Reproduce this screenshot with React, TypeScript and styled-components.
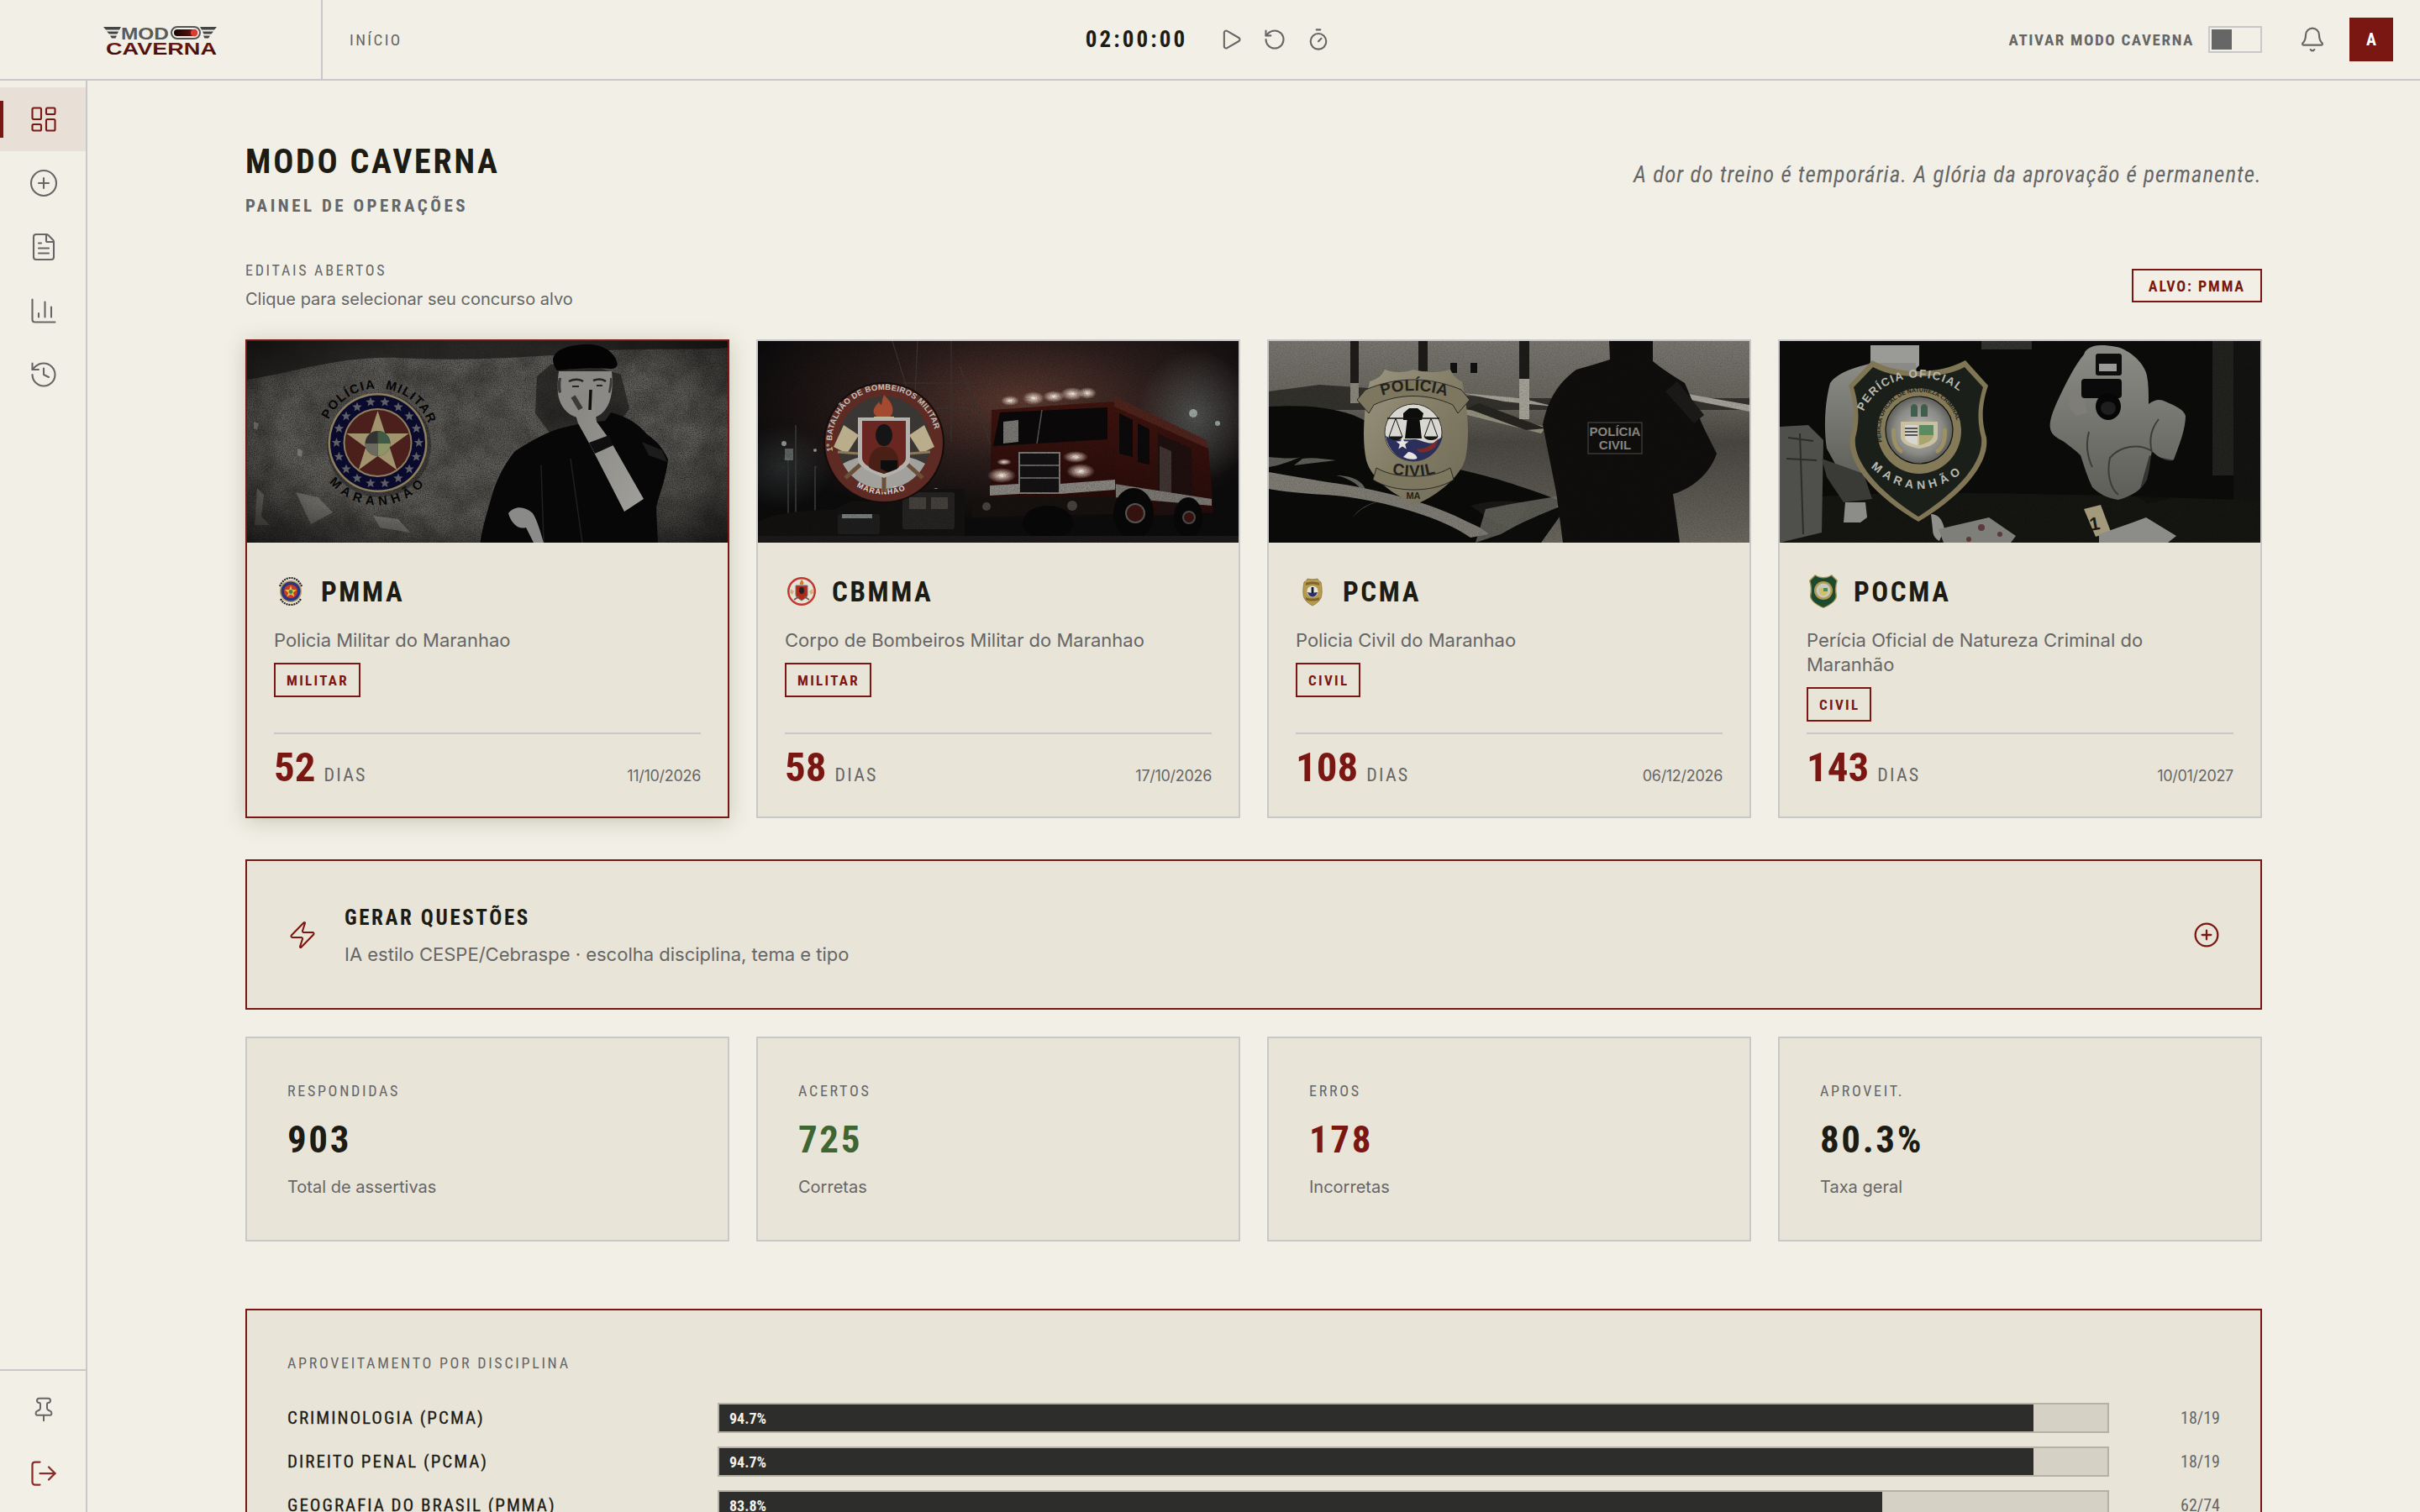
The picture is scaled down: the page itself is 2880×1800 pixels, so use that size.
import styled, { createGlobalStyle } from 'styled-components';
import {
  Bell,
  ChartColumn,
  CirclePlus,
  FileText,
  History,
  LayoutDashboard,
  LogOut,
  Pin,
  Play,
  RotateCcw,
  Timer,
  Zap,
} from 'lucide-react';

const display = `"Liberation Sans Narrow", "Roboto Condensed", Roboto, sans-serif`;
const body = `Inter, "Liberation Sans", sans-serif`;
const paper = '#f2f0e6';
const panel = '#e8e4d8';
const line = '#c8c8c8';
const wine = '#7a1712';
const ink = '#1c1c14';
const muted = '#666666';

const GlobalStyle = createGlobalStyle`
  html, body { margin: 0; padding: 0; background: ${paper}; }
  * { box-sizing: border-box; }
  #root { height: 100vh; }
`;

const Shell = styled.div`
  height: 100vh;
  display: flex;
  flex-direction: column;
  overflow: hidden;
  background: ${paper};
  font-family: ${body};
`;

const TopBar = styled.header`
  height: 96px;
  flex: none;
  display: grid;
  grid-template-columns: 1fr auto 1fr;
  align-items: stretch;
  border-bottom: 2px solid ${line};
`;

const TopLeft = styled.div`
  display: flex;
  align-items: stretch;
`;

const Brand = styled.div`
  width: 384px;
  display: flex;
  align-items: center;
  justify-content: center;
  border-right: 2px solid ${line};
`;

const Crumb = styled.span`
  align-self: center;
  padding-left: 32px;
  font-family: ${display};
  font-size: 19px;
  letter-spacing: 2.4px;
  color: ${muted};
`;

const TimerGroup = styled.div`
  display: flex;
  align-items: center;
  gap: 24px;
  margin-right: 5px;
`;

const Clock = styled.span`
  font-family: ${display};
  font-weight: 700;
  font-size: 27px;
  letter-spacing: 3.1px;
  color: ${ink};
  margin-right: 14px;
`;

const TopRight = styled.div`
  display: flex;
  align-items: center;
  justify-content: flex-end;
  padding-right: 32px;
`;

const ModeLabel = styled.span`
  font-family: ${display};
  font-weight: 700;
  font-size: 19px;
  letter-spacing: 1.6px;
  color: ${muted};
  margin-right: 17px;
`;

const Toggle = styled.div`
  width: 64px;
  height: 32px;
  border: 2px solid ${line};
  padding: 2px;
  margin-right: 44px;
`;

const Knob = styled.div`
  width: 24px;
  height: 24px;
  background: ${muted};
`;

const Avatar = styled.div`
  width: 52px;
  height: 52px;
  margin-left: 28px;
  background: ${wine};
  color: #ffffff;
  display: flex;
  align-items: center;
  justify-content: center;
  font-family: ${display};
  font-weight: 700;
  font-size: 20px;
`;

const Body = styled.div`
  flex: 1;
  min-height: 0;
  display: flex;
`;

const Sidebar = styled.aside`
  width: 104px;
  flex: none;
  display: flex;
  flex-direction: column;
  justify-content: space-between;
  border-right: 2px solid ${line};
`;

const SideGroup = styled.nav<{ $foot?: boolean }>`
  padding: 8px 0;
  border-top: ${(p) => (p.$foot ? `2px solid ${line}` : 'none')};
`;

const SideItem = styled.div<{ $active?: boolean; $danger?: boolean }>`
  position: relative;
  height: 76px;
  padding-left: 2px;
  display: flex;
  align-items: center;
  justify-content: center;
  background: ${(p) => (p.$active ? '#e8dfd6' : 'transparent')};
  color: ${(p) => (p.$active ? wine : p.$danger ? '#8b2a26' : muted)};

  &::before {
    content: '';
    display: ${(p) => (p.$active ? 'block' : 'none')};
    position: absolute;
    left: 0;
    top: 16px;
    width: 4px;
    height: 44px;
    background: ${wine};
  }
`;

const Main = styled.main`
  flex: 1;
  min-width: 0;
  overflow: hidden;
  padding-top: 73px;
`;

const Page = styled.div`
  width: 2400px;
  margin: 0 auto;
`;

const Hero = styled.div`
  display: flex;
  justify-content: space-between;
  align-items: flex-start;
  margin-bottom: 49px;
`;

const Title = styled.h1`
  margin: 0 0 15px;
  font-family: ${display};
  font-weight: 700;
  font-size: 40px;
  line-height: 48px;
  letter-spacing: 2.8px;
  color: ${ink};
`;

const Subtitle = styled.div`
  font-family: ${display};
  font-weight: 700;
  font-size: 21px;
  line-height: 26px;
  letter-spacing: 3.5px;
  color: ${muted};
`;

const Quote = styled.p`
  margin: 25px 0 0;
  font-family: ${display};
  font-style: italic;
  font-size: 27px;
  line-height: 28px;
  letter-spacing: 1px;
  color: ${muted};
`;

const SectionHead = styled.div`
  display: flex;
  justify-content: space-between;
  align-items: flex-start;
  margin-bottom: 33px;
`;

const Eyebrow = styled.div`
  font-family: ${display};
  font-size: 18px;
  line-height: 30px;
  letter-spacing: 2.7px;
  color: ${muted};
`;

const Hint = styled.div`
  margin-top: 4px;
  font-size: 20px;
  line-height: 30px;
  color: ${muted};
`;

const TargetBadge = styled.div`
  height: 40px;
  margin-top: 13px;
  padding: 0 18px;
  display: flex;
  align-items: center;
  border: 2px solid ${wine};
  font-family: ${display};
  font-weight: 700;
  font-size: 18px;
  letter-spacing: 1.9px;
  color: ${wine};
`;

const CardGrid = styled.div`
  display: grid;
  grid-template-columns: repeat(4, 1fr);
  gap: 32px;
  margin-bottom: 49px;
`;

const Card = styled.article<{ $selected?: boolean }>`
  height: 570px;
  display: flex;
  flex-direction: column;
  background: ${panel};
  border: 2px solid ${(p) => (p.$selected ? wine : line)};
  box-shadow: ${(p) => (p.$selected ? '0 4px 24px rgba(60, 60, 30, 0.22)' : 'none')};
`;

const Banner = styled.svg`
  display: block;
  width: 100%;
  height: 240px;
  flex: none;
`;

const CardBody = styled.div`
  flex: 1;
  display: flex;
  flex-direction: column;
  align-items: flex-start;
  padding: 38px 32px 32px;
`;

const CardHead = styled.div`
  height: 40px;
  display: flex;
  align-items: center;
  gap: 16px;
  margin-bottom: 24px;
`;

const Crest = styled.svg`
  width: 40px;
  height: 40px;
  flex: none;
`;

const CardName = styled.h3`
  margin: 0;
  font-family: ${display};
  font-weight: 700;
  font-size: 33px;
  letter-spacing: 2.6px;
  color: ${ink};
`;

const CardDesc = styled.p`
  margin: 0 0 12px;
  font-size: 22px;
  line-height: 29px;
  color: ${muted};
`;

const Tag = styled.span`
  height: 41px;
  padding: 0 12px 0 13px;
  display: inline-flex;
  align-items: center;
  border: 2px solid ${wine};
  font-family: ${display};
  font-weight: 700;
  font-size: 17px;
  letter-spacing: 2.3px;
  color: ${wine};
`;

const CardFoot = styled.div`
  width: 100%;
  margin-top: auto;
  border-top: 2px solid ${line};
  padding-top: 14px;
  display: flex;
  align-items: baseline;
`;

const Days = styled.span`
  font-family: ${display};
  font-weight: 700;
  font-size: 49px;
  line-height: 52px;
  color: ${wine};
  margin-right: 10px;
`;

const DaysUnit = styled.span`
  font-family: ${display};
  font-size: 22px;
  letter-spacing: 2.2px;
  color: ${muted};
`;

const CardDate = styled.span`
  margin-left: auto;
  font-size: 18px;
  letter-spacing: -0.3px;
  color: ${muted};
`;

const Generate = styled.section`
  display: flex;
  align-items: center;
  gap: 32px;
  height: 179px;
  padding: 0 48px;
  margin-bottom: 32px;
  background: ${panel};
  border: 2px solid ${wine};
  color: ${wine};
`;

const GenerateText = styled.div`
  flex: 1;
  padding-top: 4px;
`;

const GenerateTitle = styled.div`
  font-family: ${display};
  font-weight: 700;
  font-size: 25px;
  line-height: 30px;
  letter-spacing: 2.6px;
  color: ${ink};
  margin-bottom: 13px;
`;

const GenerateSub = styled.div`
  font-size: 22px;
  line-height: 30px;
  color: ${muted};
`;

const StatGrid = styled.div`
  display: grid;
  grid-template-columns: repeat(4, 1fr);
  gap: 32px;
  margin-bottom: 80px;
`;

const Stat = styled.div`
  height: 244px;
  padding: 48px;
  background: ${panel};
  border: 2px solid ${line};
`;

const StatLabel = styled(Eyebrow)`
  margin-bottom: 18px;
`;

const StatValue = styled.div<{ $tone?: string }>`
  font-family: ${display};
  font-weight: 700;
  font-size: 45px;
  line-height: 50px;
  letter-spacing: 2.6px;
  color: ${(p) => p.$tone ?? ink};
  margin-bottom: 17px;
`;

const StatNote = styled.div`
  font-size: 20px;
  line-height: 28px;
  color: ${muted};
`;

const Breakdown = styled.section`
  padding: 48px;
  background: ${panel};
  border: 2px solid ${wine};
`;

const BreakdownHead = styled(Eyebrow)`
  margin-bottom: 32px;
`;

const BarRow = styled.div`
  display: grid;
  grid-template-columns: 480px 1fr 100px;
  column-gap: 32px;
  align-items: center;
  margin-bottom: 16px;
`;

const BarLabel = styled.div`
  font-family: ${display};
  font-size: 21px;
  letter-spacing: 2px;
  -webkit-text-stroke: 0.3px ${ink};
  color: ${ink};
`;

const BarTrack = styled.div`
  height: 36px;
  background: #d5d1c5;
  border: 2px solid #b5b1a5;
`;

const BarFill = styled.div`
  height: 100%;
  padding-left: 12px;
  display: flex;
  align-items: center;
  background: #2d2d2b;
  font-family: ${display};
  font-weight: 700;
  font-size: 18px;
  color: #f2f0e6;
`;

const BarCount = styled.div`
  text-align: right;
  font-family: ${display};
  font-size: 20px;
  color: ${muted};
`;

const svgFont = '"Liberation Sans", Arial, sans-serif';

function starPoints(cx: number, cy: number, R: number, r: number, n = 5) {
  const pts: string[] = [];
  for (let i = 0; i < n * 2; i++) {
    const a = (Math.PI * i) / n - Math.PI / 2;
    const d = i % 2 === 0 ? R : r;
    pts.push(`${(cx + d * Math.cos(a)).toFixed(1)},${(cy + d * Math.sin(a)).toFixed(1)}`);
  }
  return pts.join(' ');
}

function Grain({ id, freq = 0.9, alpha = 0.5 }: { id: string; freq?: number; alpha?: number }) {
  return (
    <filter id={id} x="0" y="0" width="100%" height="100%">
      <feTurbulence type="fractalNoise" baseFrequency={freq} numOctaves={4} seed={7} />
      <feColorMatrix values={`0 0 0 0 0  0 0 0 0 0  0 0 0 0 0  0 0 0 ${alpha * 3} ${-alpha}`} />
    </filter>
  );
}

function Logo() {
  return (
    <svg width="136" height="44" viewBox="0 -5 136 44">
      <defs>
        <linearGradient id="logoRed" x1="0" y1="0" x2="0" y2="1">
          <stop offset="0" stopColor="#8a1c16" />
          <stop offset="1" stopColor="#2c0b09" />
        </linearGradient>
        <linearGradient id="logoPill" x1="0" y1="0" x2="1" y2="0">
          <stop offset="0" stopColor="#140606" />
          <stop offset="0.6" stopColor="#4a0f0c" />
          <stop offset="1" stopColor="#a01a14" />
        </linearGradient>
      </defs>
      <path d="M0 2h21l-2 3.500H3zM4 7.500h14l-1.500 3H7zM8 12.500h8l-1.500 3H10z" fill="#454545" />
      <path d="M135 2h-20l2 3.500h15zM131 7.500h-13l1.500 3h9zM127 12.500h-8l1.500 3h4.500z" fill="#454545" />
      <text x="21" y="16.500" fontFamily={svgFont} fontWeight="700" fontSize="20.500" fill="#5a5a5a" textLength="57" lengthAdjust="spacingAndGlyphs">MOD</text>
      <rect x="81" y="2" width="34" height="14" rx="7" fill="#f2f0e6" stroke="#555" strokeWidth="2" />
      <rect x="84" y="5" width="28" height="8" rx="4" fill="url(#logoPill)" />
      <circle cx="108" cy="9" r="4.200" fill="#e03a30" />
      <text x="3" y="35" fontFamily={svgFont} fontWeight="700" fontSize="21" fill="url(#logoRed)" textLength="132" lengthAdjust="spacingAndGlyphs">CAVERNA</text>
    </svg>
  );
}

function PmmaEmblem() {
  const ring = Array.from({ length: 18 }, (_, i) => {
    const a = (i / 18) * Math.PI * 2;
    return starPoints(155.5 + 49 * Math.cos(a), 121 + 49 * Math.sin(a), 6, 2.6);
  });
  return (
    <g>
      <circle cx="157" cy="124" r="62" fill="#000" opacity="0.3" />
      <circle cx="155.5" cy="121" r="59" fill="#8d7f5f" />
      <circle cx="155.5" cy="121" r="56.5" fill="#0a0b2c" />
      {ring.map((p) => (
        <polygon key={p} points={p} fill="#5e5e66" />
      ))}
      <circle cx="155.5" cy="121" r="41" fill="#8d7f5f" />
      <circle cx="155.5" cy="121" r="39" fill="#4a1f1c" />
      <polygon points={starPoints(155.5, 122, 39, 15)} fill="#a1936d" />
      <circle cx="155.5" cy="122" r="15" fill="#333" />
      <path d="M155.5 107a15 15 0 0 1 15 15h-15z" fill="#3f5a45" />
      <path d="M155.5 122h15a15 15 0 0 1-15 15z" fill="#8c9468" />
      <path d="M140.5 122h15v15a15 15 0 0 1-15-15z" fill="#6a6a60" />
      <path id="pmArcA" d="M97 93.700A64.500 64.500 0 0 1 153.200 56.500" fill="none" />
      <path id="pmArcB" d="M164.500 57.100A64.500 64.500 0 0 1 216.500 100" fill="none" />
      <path id="pmArcC" d="M98 168A74 74 0 0 0 213 168" fill="none" />
      <text fontFamily={svgFont} fontWeight="700" fontSize="15" letterSpacing="1.5" fill="#060606">
        <textPath href="#pmArcA">POLÍCIA</textPath>
      </text>
      <text fontFamily={svgFont} fontWeight="700" fontSize="15" letterSpacing="1.5" fill="#060606">
        <textPath href="#pmArcB">MILITAR</textPath>
      </text>
      <text fontFamily={svgFont} fontWeight="700" fontSize="15" letterSpacing="5.5" fill="#060606">
        <textPath href="#pmArcC">MARANHÃO</textPath>
      </text>
    </g>
  );
}

function PmmaScene() {
  return (
    <Banner viewBox="0 0 572 240" preserveAspectRatio="none">
      <defs>
        <Grain id="pmGrain" freq={0.8} alpha={0.55} />
        <Grain id="pmBlotch" freq={0.03} alpha={0.55} />
        <radialGradient id="pmVig" cx="0.5" cy="0.45" r="0.78">
          <stop offset="0.55" stopColor="#000" stopOpacity="0" />
          <stop offset="1" stopColor="#000" stopOpacity="0.8" />
        </radialGradient>
        <linearGradient id="pmSkin" x1="0" y1="0" x2="1" y2="1">
          <stop offset="0" stopColor="#86857f" />
          <stop offset="1" stopColor="#a09f9b" />
        </linearGradient>
      </defs>
      <rect width="572" height="240" fill="#605e5a" />
      <rect width="572" height="240" filter="url(#pmBlotch)" opacity="0.3" />
      <rect width="572" height="240" filter="url(#pmGrain)" opacity="0.5" />
      <path d="M0 0h572v8c-60 4-120-2-190 8-70 4-130 8-200 4-70-3-120 16-182 26z" fill="#1d1b1a" opacity="0.8" />
      <path d="M12 175l8 8-3 26 10 10-18 0zM58 180l26 6 18 18-26 14zM150 208l30 4 14 16-36-6zM8 96l6 2-2 8-4-2zM60 128l6 2-1 8-5-2z" fill="#a5a39e" opacity="0.45" />
      <rect width="572" height="240" fill="url(#pmVig)" />
      <PmmaEmblem />
      <path d="M345 42l16-14 58 4 26 8 10 40-20 30-70 6-22-30z" fill="#141312" opacity="0.6" />
      <path d="M277 244c2-20 10-44 15-62 6-20 16-38 27-51 16-10 32-20 50-26 20-6 38-8 57-10l7-10c14 4 30 10 43 26 12 8 20 18 25 30-2 22-10 40-14 57l2 46z" fill="#070707" />
      <path d="M350 148l3 92M385 140l14 100" stroke="#202020" strokeWidth="1.500" fill="none" />
      <path d="M470 120l24 10 6 14-22-8z" fill="#1c1c1c" />
      <path d="M371 36h63c2 20 0 36-8 46-6 8-16 12-28 10-16-2-26-14-28-30-1-8 0-18 1-26z" fill="#8a8986" />
      <path d="M371 44c-2 6-2 12 0 18l3-1c-1-6-1-11 0-17zM434 44c1 6 0 12-2 18l-2-1c1-6 2-11 2-17z" fill="#3a3a38" />
      <path d="M364 22c2-13 22-18 42-18 18 0 33 10 35 24-2 4-4 5-8 5-22-2-46 0-64 2-3-4-5-8-5-13z" fill="#040404" />
      <path d="M383 48c6-3 13-3 17 0M412 47c5-2 11-2 15 1" stroke="#232321" strokeWidth="2.500" fill="none" />
      <path d="M387 54h8M416 53h7" stroke="#262624" strokeWidth="2.200" />
      <path d="M394 98c-3-10-7-24-6-33l8-2 14-5 4 22 2 16 16 22 40 70-23 15-23-45-17-33z" fill="url(#pmSkin)" />
      <path d="M388 66l9 15" stroke="#3a3a38" strokeWidth="6" />
      <path d="M409 58l-1 24" stroke="#0e0e0e" strokeWidth="3.500" />
      <path d="M407 121l24-9 5 12-22 10z" fill="#0f0f0f" />
      <path d="M311 205c7-9 19-9 29 0 6 10 9 22 13 35h-12l-9-18c-10 3-18-6-21-17z" fill="#8a8a88" />
    </Banner>
  );
}

function CbmmaScene() {
  return (
    <Banner viewBox="0 0 572 240" preserveAspectRatio="none">
      <defs>
        <radialGradient id="cbGlow" cx="0.55" cy="0.3" r="0.6">
          <stop offset="0" stopColor="#5c3a31" />
          <stop offset="0.5" stopColor="#2c1e1c" />
          <stop offset="1" stopColor="#0d0c0d" />
        </radialGradient>
        <radialGradient id="cbMist" cx="0.5" cy="0.5" r="0.5">
          <stop offset="0" stopColor="#7a8a88" stopOpacity="0.5" />
          <stop offset="1" stopColor="#7a8a88" stopOpacity="0" />
        </radialGradient>
        <radialGradient id="cbLight" cx="0.5" cy="0.5" r="0.5">
          <stop offset="0" stopColor="#ffffff" />
          <stop offset="0.35" stopColor="#e8d2c4" stopOpacity="0.75" />
          <stop offset="1" stopColor="#e8d2c4" stopOpacity="0" />
        </radialGradient>
        <linearGradient id="cbBody" x1="0" y1="0" x2="0" y2="1">
          <stop offset="0" stopColor="#40140f" />
          <stop offset="1" stopColor="#260c0a" />
        </linearGradient>
        <Grain id="cbGrain" freq={0.7} alpha={0.35} />
      </defs>
      <rect width="572" height="240" fill="url(#cbGlow)" />
      <ellipse cx="520" cy="90" rx="70" ry="80" fill="url(#cbMist)" />
      <ellipse cx="30" cy="150" rx="60" ry="50" fill="url(#cbMist)" opacity="0.5" />
      <path d="M160 0l40 130M190 0l-6 120M230 0v120M240 30l40 100M172 50h80M190 80h70" stroke="#3c3633" strokeWidth="1.200" fill="none" />
      <path d="M45 100v120M70 150h-2v70M30 140h6v70" stroke="#343432" strokeWidth="2" fill="none" />
      <rect x="32" y="128" width="10" height="14" fill="#9aa6a4" opacity="0.5" />
      <g fill="#b7c4bf" opacity="0.75">
        <circle cx="31" cy="122" r="3" />
        <circle cx="68" cy="130" r="2" />
        <circle cx="518" cy="86" r="5" />
        <circle cx="510" cy="112" r="4" />
        <circle cx="547" cy="98" r="3" />
        <circle cx="212" cy="178" r="3" />
      </g>
      <path d="M0 215c20-10 50-14 90-14l20-10h60l40-15h36v60H0z" fill="#131211" />
      <rect x="95" y="206" width="50" height="24" rx="3" fill="#201f1f" />
      <rect x="100" y="206" width="36" height="5" fill="#9ea6a6" opacity="0.7" />
      <rect x="172" y="180" width="62" height="44" rx="3" fill="#262422" />
      <path d="M180 186h20v14h-20zM206 186h20v14h-20z" fill="#45423e" />
      <path d="M424 70l112 56 6 78-118 6z" fill="url(#cbBody)" />
      <path d="M424 66l110 52 2 10-112-50z" fill="#4f241d" />
      <path d="M430 86l16 8v44l-16-4zM452 98l14 7v42l-14-3z" fill="#0c0a0a" />
      <path d="M476 110l40 18 2 76-42 4z" fill="#201010" />
      <path d="M478 125l14 6v58l-14 1z" fill="#4a3e3c" opacity="0.8" />
      <path d="M424 170l116 18v8l-116-10z" fill="#7c7873" />
      <path d="M278 82l146-10 2 116-150 4z" fill="url(#cbBody)" />
      <path d="M288 85l128-6v38l-136 8z" fill="#0b0909" />
      <path d="M292 96l18-2v26l-18 2z" fill="#7a7874" />
      <path d="M338 82l-6 40" stroke="#5c5a58" strokeWidth="1.500" />
      <rect x="311" y="133" width="48" height="48" fill="#141212" stroke="#7c7a76" strokeWidth="2" />
      <path d="M311 148h48M311 163h48" stroke="#7c7a76" strokeWidth="1.500" />
      <path d="M276 172l35-2v12l-35 2zM359 170l66-5v12l-66 5z" fill="#8a8680" />
      <path d="M255 186h170v20l-170 4z" fill="#17120f" />
      <circle cx="272" cy="197" r="5" fill="#4a4340" />
      <circle cx="374" cy="196" r="6" fill="#4a4340" />
      <ellipse cx="290" cy="160" rx="17" ry="9" fill="url(#cbLight)" />
      <ellipse cx="384" cy="155" rx="17" ry="9" fill="url(#cbLight)" />
      <ellipse cx="378" cy="138" rx="15" ry="7" fill="url(#cbLight)" />
      <ellipse cx="293" cy="144" rx="9" ry="4" fill="url(#cbLight)" />
      <g fill="url(#cbLight)">
        <ellipse cx="300" cy="71" rx="11" ry="6" />
        <ellipse cx="328" cy="68" rx="13" ry="8" />
        <ellipse cx="352" cy="66" rx="13" ry="7" />
        <ellipse cx="374" cy="63" rx="14" ry="8" />
        <ellipse cx="392" cy="62" rx="11" ry="7" />
      </g>
      <g fill="#090808">
        <ellipse cx="345" cy="216" rx="30" ry="20" />
        <ellipse cx="447" cy="205" rx="24" ry="30" />
        <ellipse cx="512" cy="210" rx="17" ry="24" />
      </g>
      <circle cx="449" cy="205" r="11" fill="#3a1410" stroke="#5a5a58" strokeWidth="2" />
      <circle cx="513" cy="210" r="7" fill="#3a1410" stroke="#4f4f4d" strokeWidth="2" />
      <rect y="232" width="572" height="8" fill="#1d1a19" />
      <rect width="572" height="240" filter="url(#cbGrain)" opacity="0.4" />
      <g>
        <circle cx="150" cy="121" r="72" fill="#120d0b" />
        <circle cx="150" cy="121" r="70" fill="#5e2a24" />
        <circle cx="150" cy="121" r="55" fill="#3a3633" />
        <path d="M101 146a55 55 0 0 0 98 0c-20-11-34-9-49-9s-29-2-49 9z" fill="#a3a19d" />
        <path id="cbArc" d="M89 131A62 62 0 1 1 211 131" fill="none" />
        <path id="cbArcB" d="M114 171A62 62 0 0 0 186 171" fill="none" />
        <text fontFamily={svgFont} fontSize="9.500" fontWeight="700" letterSpacing="0.300" fill="#c4c0ba">
          <textPath href="#cbArc">1º BATALHÃO DE BOMBEIROS MILITAR</textPath>
        </text>
        <text fontFamily={svgFont} fontSize="9" fontWeight="700" letterSpacing="1" fill="#d9d6d0">
          <textPath href="#cbArcB" startOffset="4">MARANHÃO</textPath>
        </text>
        <path d="M150 64c8 8 12 14 10 22-2 4-4 6-10 6s-10-2-12-6c-2-6 4-10 6-14 1 3 3 4 3 4 1-4 1-8 3-12z" fill="#a44a30" />
        <rect x="138" y="90" width="24" height="4" fill="#c8b890" />
        <path d="M102 100l18 12-14 22-16-8zM198 100l-18 12 14 22 16-8z" fill="#b9ad8c" />
        <path d="M95 132l25 2M205 132l-25 2" stroke="#8a7a5a" strokeWidth="3" />
        <path d="M122 147l-18 16M178 147l18 16M150 160v20" stroke="#6a5038" strokeWidth="5" />
        <path d="M119 91h62v50c0 10-18 16-31 22-13-6-31-12-31-22z" fill="#b5b2ad" />
        <path d="M124 95h52v44c0 9-15 14-26 19-11-5-26-10-26-19z" fill="#6a2620" />
        <ellipse cx="150" cy="112" rx="10" ry="13" fill="#151515" />
        <path d="M132 150c0-14 4-24 18-24s18 10 18 24c-4 4-12 6-18 8-6-2-14-4-18-8z" fill="#4a2016" />
        <path d="M146 142h20v10l-12 4-8-4z" fill="#0d0d0d" />
      </g>
    </Banner>
  );
}

function PcmaScene() {
  return (
    <Banner viewBox="0 0 572 240" preserveAspectRatio="none">
      <defs>
        <linearGradient id="pcSky" x1="0" y1="0" x2="0" y2="1">
          <stop offset="0" stopColor="#797670" />
          <stop offset="0.3" stopColor="#68655d" />
          <stop offset="0.5" stopColor="#4a4841" />
          <stop offset="1" stopColor="#6a675f" />
        </linearGradient>
        <linearGradient id="pcBadge" x1="0" y1="0" x2="1" y2="1">
          <stop offset="0" stopColor="#9a9480" />
          <stop offset="0.5" stopColor="#837d66" />
          <stop offset="1" stopColor="#6f6a56" />
        </linearGradient>
        <Grain id="pcGrain" freq={0.8} alpha={0.3} />
      </defs>
      <rect width="572" height="240" fill="url(#pcSky)" />
      <path d="M0 60l60-8 60 4 90 8 100 4 170 0 92 0v14H0z" fill="#34322d" />
      <path d="M230 62l70 6 40 10-60-6zM470 58l102 18v8l-90-18z" fill="#a5a298" />
      <path d="M220 78l110 24-6 8-96-24z" fill="#94917f" />
      <path d="M236 80l70 26 24-2-80-30z" fill="#26251f" />
      <rect x="97" y="0" width="10" height="55" fill="#1e1c19" />
      <rect x="97" y="50" width="10" height="24" fill="#8a877d" />
      <rect x="178" y="0" width="11" height="36" fill="#1e1c19" />
      <rect x="298" y="0" width="12" height="45" fill="#1e1c19" />
      <rect x="298" y="45" width="12" height="48" fill="#a5a298" />
      <rect x="216" y="26" width="8" height="12" fill="#111" />
      <rect x="240" y="26" width="8" height="12" fill="#111" />
      <path d="M0 78c40-2 70 0 100 10 30 12 50 32 66 50l90 22c30 8 70 22 90 30l-22 50H0z" fill="#0b0b0a" />
      <path d="M0 156l70 12c60 8 120 24 160 44 12 6 24 10 32 18l-22 4c-30-22-100-44-160-50-30-2-60-4-80-8z" fill="#7e7c73" />
      <path d="M0 138c20 2 30 2 38 0-10 4-24 10-38 12zM40 140c12-2 24 0 40 2l-50 6z" fill="#5e5d57" />
      <path d="M100 210c10-16 40-26 66-20-14-4-48-2-66 20zM80 160c20 0 40 8 36 30-2-14-16-26-36-30z" fill="#7b7a74" opacity="0.8" />
      <path d="M240 196c20-6 50-8 70-2l-20 30-30-14z" fill="#1a1917" />
      <path d="M258 200l30-6 60-10-2 14-70 32-30 10z" fill="#7c7a70" opacity="0.7" />
      <path d="M262 240c20-16 52-30 82-42l10 0-30 42z" fill="#0d0d0c" />
      <path d="M405 0h52v24c12 10 28 20 38 26l22 52 16 32c-8 24-30 42-52 48l8 58H350l-8-60-16-80c6-30 18-50 40-66 14-4 28-8 40-12z" fill="#100f0e" />
      <path d="M472 60l14-12 32 40-12 10z" fill="#1c1b19" />
      <rect x="380" y="97" width="64" height="37" fill="none" stroke="#55534e" strokeWidth="1" />
      <text x="412" y="113" textAnchor="middle" fontFamily={svgFont} fontWeight="700" fontSize="15" fill="#8e8c85">POLÍCIA</text>
      <text x="412" y="129" textAnchor="middle" fontFamily={svgFont} fontWeight="700" fontSize="15" fill="#8e8c85">CIVIL</text>
      <rect width="572" height="240" filter="url(#pcGrain)" opacity="0.35" />
      <path d="M172 34c16 4 30 4 44 0 4 8 8 12 14 14 6 28 10 64 4 92-6 22-34 44-58 54-28-10-54-30-60-52-6-28-2-64 4-94 8-2 14-6 18-14 10 4 24 4 34 0z" fill="url(#pcBadge)" />
      <path d="M115 58c38-16 76-16 114 0l10 12-14 16-6-10c-30-14-64-14-94 0l-6 10-14-16z" fill="#7d7760" stroke="#2b2a24" strokeWidth="1" />
      <path id="pcTop" d="M126 68c30-12 60-12 92 0" fill="none" />
      <text fontFamily={svgFont} fontWeight="700" fontSize="19" letterSpacing="0.200" fill="#23221c">
        <textPath href="#pcTop" startOffset="9">POLÍCIA</textPath>
      </text>
      <circle cx="172" cy="109" r="34" fill="#d9d7d2" stroke="#35332c" strokeWidth="1" />
      <path d="M139 113c12 6 26 4 36 4 10 2 14 6 22 4l10-8c-4 16-16 30-35 30-18 0-30-14-33-30z" fill="#2b2f5c" />
      <path d="M176 128c8 2 18-4 26-12l-4 10c-6 6-14 8-20 6z" fill="#7a2c28" />
      <path d="M166 132c6 0 12 6 10 8-6 2-12 0-16-2z" fill="#e6e4e0" />
      <polygon points={starPoints(159, 122, 8, 3.4)} fill="#e6e4e0" />
      <path d="M165 82h14v8l3 26h-20l3-26z" fill="#0d0d0c" />
      <path d="M160 86l7-6 10 0 7 6-2 8h-22z" fill="#0d0d0c" />
      <path d="M141 92h62" stroke="#151512" strokeWidth="1.500" />
      <path d="M151 92l-8 22h16zM193 92l-8 22h16z" fill="none" stroke="#151512" strokeWidth="1" />
      <path d="M143 114a8 4 0 0 0 16 0zM185 114a8 4 0 0 0 16 0z" fill="#151512" />
      <path d="M128 151c14 8 30 10 44 10 16 0 30-2 44-10l4 14c-14 9-32 12-48 12-16 0-34-3-48-12z" fill="#7d7760" stroke="#2b2a24" strokeWidth="1" />
      <path id="pcBot" d="M138 155c22 8 46 8 68 0" fill="none" />
      <text fontFamily={svgFont} fontWeight="700" fontSize="19" letterSpacing="1" fill="#23221c">
        <textPath href="#pcBot" startOffset="9">CIVIL</textPath>
      </text>
      <text x="172" y="188" textAnchor="middle" fontFamily={svgFont} fontWeight="700" fontSize="11" fill="#23221c">MA</text>
    </Banner>
  );
}

function PocmaScene() {
  return (
    <Banner viewBox="0 0 572 240" preserveAspectRatio="none">
      <defs>
        <radialGradient id="poSilver" cx="0.5" cy="0.5" r="0.5">
          <stop offset="0" stopColor="#b8b8b4" />
          <stop offset="0.7" stopColor="#8a8a86" />
          <stop offset="1" stopColor="#5e5e5a" />
        </radialGradient>
        <linearGradient id="poSuit" x1="0" y1="0" x2="0" y2="1">
          <stop offset="0" stopColor="#8c8c87" />
          <stop offset="1" stopColor="#5e5e59" />
        </linearGradient>
        <Grain id="poGrain" freq={0.85} alpha={0.3} />
      </defs>
      <rect width="572" height="240" fill="#0c0d0b" />
      <rect x="515" y="0" width="26" height="160" fill="#232320" />
      <rect x="540" y="0" width="32" height="240" fill="#141412" />
      <rect x="240" y="0" width="60" height="10" fill="#33332f" />
      <path d="M0 190c80-10 200-14 572 0v50H0z" fill="#161712" />
      <rect width="572" height="240" filter="url(#poGrain)" fill="#333" opacity="0.5" />
      <path d="M0 102l34-2 18 18-2 110-50 12z" fill="#4f4f4b" />
      <path d="M10 115l30 4M8 140l36 2M24 110l4 120" stroke="#2c2c2a" strokeWidth="2" fill="none" />
      <path d="M108 5h58v24l-10 10h-48z" fill="#9a9a96" />
      <path d="M60 50c10-14 34-20 52-24h50l8 130-70 0-22 12-22-40c-4-26-2-56 4-78z" fill="url(#poSuit)" />
      <path d="M50 140l50 18 10 30-34 4-20-30z" fill="#3a3a37" />
      <path d="M78 192h24l2 18-8 6H76z" fill="#8c8c88" />
      <path d="M180 206c8 0 14 6 16 18l-6 14c-4-2-8-6-8-14z" fill="#8f8f8b" />
      <path d="M189 224l60-14 32 22-6 8h-80z" fill="#7f7f79" />
      <g fill="#5a3a3a">
        <circle cx="240" cy="222" r="4" />
        <circle cx="262" cy="230" r="3" />
        <circle cx="225" cy="236" r="3" />
      </g>
      <path d="M362 200l20-5 12 32-18 6z" fill="#a39a7c" />
      <text x="370" y="226" fontFamily={svgFont} fontWeight="700" fontSize="22" fill="#1a1a14" transform="rotate(-10 370 226)">1</text>
      <path d="M380 230l40-14 16-6 36 22-10 8h-82z" fill="#8c8c88" />
      <path d="M362 16c2-7 10-11 20-11 12 0 24 2 31 7 14 8 22 20 24 29 2 10 2 22 2 34 8-6 14-6 20-3 12 5 22 10 24 17 0 16-8 36-14 52-4 4-16 0-26-10-2 8-2 20-6 34-6 12-18 20-34 24-14-2-24-8-31-15-6-12-10-26-14-38-6-6-14-12-21-17-8-4-14-8-15-15-2-8 4-24 14-44 8-16 16-32 26-44z" fill="url(#poSuit)" />
      <path d="M443 133c-4-16 0-30 8-40M403 183c-10-8-14-26-10-44 12-14 34-18 50-8M368 108c-4 14-2 30 4 42" fill="none" stroke="#3c3c38" strokeWidth="2" />
      <path d="M440 136l-14 50 12 8 26-6 6-46z" fill="#0c0d0b" opacity="0.55" />
      <path d="M348 55c6 0 12 4 14 12l4 18-12 4c-6-4-10-10-10-18z" fill="#7e7e77" />
      <rect x="376" y="15" width="31" height="26" rx="3" fill="#0d0d0d" />
      <rect x="380" y="27" width="21" height="9" fill="#9a9a96" />
      <rect x="359" y="45" width="48" height="23" rx="4" fill="#0a0a0a" />
      <ellipse cx="391" cy="78" rx="15" ry="16" fill="#060606" />
      <ellipse cx="391" cy="80" rx="9" ry="8" fill="#1e1e1e" />
      <path d="M82 53l28-30c18 10 38 13 55 13s37-3 56-13l27 30c-8 24-8 42-2 62 4 28-24 66-81 100-57-34-85-72-81-100 6-20 6-38-2-62z" fill="#807655" />
      <path d="M88 55l23-24c16 9 36 11 54 11s38-2 55-11l22 24c-7 24-7 41-2 60 3 26-22 60-75 94-53-34-78-68-75-94 5-19 5-36-2-60z" fill="#1a2019" />
      <path id="poTop" d="M100 84C122 30 208 30 232 84" fill="none" />
      <text fontFamily={svgFont} fontWeight="700" fontSize="13.500" letterSpacing="1.500" fill="#b8b8b0">
        <textPath href="#poTop">PERÍCIA OFICIAL</textPath>
      </text>
      <path id="poBot" d="M104 146Q165 206 230 146" fill="none" />
      <text fontFamily={svgFont} fontWeight="700" fontSize="14" letterSpacing="5" fill="#b8b8b0">
        <textPath href="#poBot" startOffset="6">MARANHÃO</textPath>
      </text>
      <ellipse cx="166" cy="107" rx="50" ry="51" fill="#857a58" />
      <ellipse cx="166" cy="106" rx="40" ry="40" fill="url(#poSilver)" stroke="#111" strokeWidth="1.200" />
      <path id="poRing" d="M122 120A46 46 0 1 1 210 120" fill="none" />
      <text fontFamily={svgFont} fontSize="7" fontWeight="700" fill="#1a1a14">
        <textPath href="#poRing">PERÍCIA OFICIAL DE NATUREZA CRIMINAL</textPath>
      </text>
      <path d="M144 96h44v18c0 8-10 12-22 14-12-2-22-6-22-14z" fill="#c8c0a0" />
      <path d="M149 100h15v24c-8-2-15-4-15-10z" fill="#d8d6d0" />
      <path d="M149 104h15M149 108h15M149 112h15" stroke="#2b2b2b" strokeWidth="1.500" />
      <path d="M166 100h17v12h-17z" fill="#5c8a62" />
      <path d="M166 112h17c0 6-8 10-17 12z" fill="#a8a570" />
      <path d="M136 104c-2 12 2 24 10 28M196 104c2 12-2 24-10 28" stroke="#9c9064" strokeWidth="5" fill="none" />
      <path d="M156 78c2-4 6-4 8 0v12h-8zM168 78c2-4 6-4 8 0v12h-8z" fill="#3f5e4c" />
    </Banner>
  );
}

function PmmaCrest() {
  return (
    <Crest viewBox="0 0 40 40">
      <circle cx="20" cy="20" r="13" fill="#b19a62" />
      <circle cx="20" cy="20" r="11.500" fill="#2b3480" />
      <circle cx="20" cy="20" r="8" fill="#cc3a24" />
      <polygon points={starPoints(20, 20.5, 7.5, 3)} fill="#e0c54a" />
      <circle cx="20" cy="20.500" r="2.400" fill="#4d7a4c" />
      <path d="M7 14c3-7 8-10 13-10s10 3 13 10" fill="none" stroke="#222" strokeWidth="2.200" strokeDasharray="2 1" />
      <path d="M8 29c3 5 7 7 12 7s9-2 12-7" fill="none" stroke="#222" strokeWidth="2.200" strokeDasharray="2 1" />
    </Crest>
  );
}

function CbmmaCrest() {
  return (
    <Crest viewBox="0 0 40 40">
      <circle cx="20" cy="20" r="17" fill="#c0392f" />
      <circle cx="20" cy="20" r="14.500" fill="#e6e2d8" />
      <path d="M13 13h14v11c0 3-4 5-7 7-3-2-7-4-7-7z" fill="#b3261c" stroke="#777" strokeWidth="1" />
      <path d="M20 6c2 2 3 4 2 6h-4c-1-2 1-4 2-6z" fill="#d9782a" />
      <ellipse cx="20" cy="19" rx="3" ry="4" fill="#222" />
      <path d="M7 17l4 3-2 4-3-2zM33 17l-4 3 2 4 3-2z" fill="#cbb67a" />
      <path d="M11 30l6-4M29 30l-6-4" stroke="#7a5a38" strokeWidth="1.600" />
    </Crest>
  );
}

function PcmaCrest() {
  return (
    <Crest viewBox="0 0 40 40">
      <path d="M14 5c4 1 8 1 12 0 1 2 2 3 4 4 1 6 2 13 0 19-2 4-6 7-10 9-4-2-8-5-10-9-2-6-1-13 0-19 2-1 3-2 4-4z" fill="#b89a4e" stroke="#8a7238" strokeWidth="0.800" />
      <path d="M12 10c5-2 11-2 16 0v3c-5-2-11-2-16 0zM12 27c5 2 11 2 16 0v3c-5 2-11 2-16 0z" fill="#7b6630" />
      <circle cx="20" cy="20" r="6.600" fill="#e6e6e2" />
      <path d="M14 21c3 1 6 1 12 0-1 3-3 5.500-6 5.500s-5-2.500-6-5.500z" fill="#27306e" />
      <rect x="18.600" y="15" width="2.800" height="7" fill="#1a1a1a" />
    </Crest>
  );
}

function PocmaCrest() {
  return (
    <Crest viewBox="0 0 40 40">
      <path d="M3 7l7-7c3 2 6 3 10 3s7-1 10-3l7 7c-2 7-2 12-1 17 1 6-6 12-16 16C10 36 3 30 4 24c1-5 1-10-1-17z" fill="#a3925a" />
      <path d="M4.500 7.500l6-6c3 2 6 3 9.500 3s6.500-1 9.500-3l6 6c-2 7-2 12-1 17 1 5-5 10.500-14.500 14.500C10.500 35 4.500 29.500 5.500 24.500c1-5 1-10-1-17z" fill="#1d4a2c" />
      <circle cx="20" cy="19" r="11" fill="#b09a55" />
      <circle cx="20" cy="19" r="8.500" fill="#c9c9c4" />
      <path d="M15 16h10v5c0 2-2.500 3.500-5 4.500-2.500-1-5-2.500-5-4.500z" fill="#cfc06a" />
      <path d="M20 16h5v4h-5z" fill="#4a8a56" />
    </Crest>
  );
}

const editais = [
  { name: 'PMMA', desc: 'Policia Militar do Maranhao', tag: 'MILITAR', days: 52, date: '11/10/2026', Scene: PmmaScene, Mark: PmmaCrest },
  { name: 'CBMMA', desc: 'Corpo de Bombeiros Militar do Maranhao', tag: 'MILITAR', days: 58, date: '17/10/2026', Scene: CbmmaScene, Mark: CbmmaCrest },
  { name: 'PCMA', desc: 'Policia Civil do Maranhao', tag: 'CIVIL', days: 108, date: '06/12/2026', Scene: PcmaScene, Mark: PcmaCrest },
  { name: 'POCMA', desc: 'Perícia Oficial de Natureza Criminal do Maranhão', tag: 'CIVIL', days: 143, date: '10/01/2027', Scene: PocmaScene, Mark: PocmaCrest },
];

const stats = [
  { label: 'RESPONDIDAS', value: '903', note: 'Total de assertivas' },
  { label: 'ACERTOS', value: '725', note: 'Corretas', tone: '#3f6632' },
  { label: 'ERROS', value: '178', note: 'Incorretas', tone: wine },
  { label: 'APROVEIT.', value: '80.3%', note: 'Taxa geral' },
];

const disciplinas = [
  { name: 'CRIMINOLOGIA (PCMA)', pct: 94.7, count: '18/19' },
  { name: 'DIREITO PENAL (PCMA)', pct: 94.7, count: '18/19' },
  { name: 'GEOGRAFIA DO BRASIL (PMMA)', pct: 83.8, count: '62/74' },
];

export default function App() {
  return (
    <Shell>
      <GlobalStyle />
      <TopBar>
        <TopLeft>
          <Brand>
            <Logo />
          </Brand>
          <Crumb>INÍCIO</Crumb>
        </TopLeft>
        <TimerGroup>
          <Clock>02:00:00</Clock>
          <Play size={28} color={muted} strokeWidth={1.8} />
          <RotateCcw size={28} color={muted} strokeWidth={1.8} />
          <Timer size={28} color={muted} strokeWidth={1.8} />
        </TimerGroup>
        <TopRight>
          <ModeLabel>ATIVAR MODO CAVERNA</ModeLabel>
          <Toggle>
            <Knob />
          </Toggle>
          <Bell size={32} color={muted} strokeWidth={1.6} />
          <Avatar>A</Avatar>
        </TopRight>
      </TopBar>
      <Body>
        <Sidebar>
          <SideGroup>
            <SideItem $active>
              <LayoutDashboard size={36} strokeWidth={1.4} />
            </SideItem>
            <SideItem>
              <CirclePlus size={36} strokeWidth={1.4} />
            </SideItem>
            <SideItem>
              <FileText size={36} strokeWidth={1.4} />
            </SideItem>
            <SideItem>
              <ChartColumn size={36} strokeWidth={1.4} />
            </SideItem>
            <SideItem>
              <History size={36} strokeWidth={1.4} />
            </SideItem>
          </SideGroup>
          <SideGroup $foot>
            <SideItem>
              <Pin size={32} strokeWidth={1.5} />
            </SideItem>
            <SideItem $danger>
              <LogOut size={36} strokeWidth={1.5} />
            </SideItem>
          </SideGroup>
        </Sidebar>
        <Main>
          <Page>
            <Hero>
              <div>
                <Title>MODO CAVERNA</Title>
                <Subtitle>PAINEL DE OPERAÇÕES</Subtitle>
              </div>
              <Quote>A dor do treino é temporária. A glória da aprovação é permanente.</Quote>
            </Hero>
            <SectionHead>
              <div>
                <Eyebrow>EDITAIS ABERTOS</Eyebrow>
                <Hint>Clique para selecionar seu concurso alvo</Hint>
              </div>
              <TargetBadge>ALVO: PMMA</TargetBadge>
            </SectionHead>
            <CardGrid>
              {editais.map(({ name, desc, tag, days, date, Scene, Mark }, i) => (
                <Card key={name} $selected={i === 0}>
                  <Scene />
                  <CardBody>
                    <CardHead>
                      <Mark />
                      <CardName>{name}</CardName>
                    </CardHead>
                    <CardDesc>{desc}</CardDesc>
                    <Tag>{tag}</Tag>
                    <CardFoot>
                      <Days>{days}</Days>
                      <DaysUnit>DIAS</DaysUnit>
                      <CardDate>{date}</CardDate>
                    </CardFoot>
                  </CardBody>
                </Card>
              ))}
            </CardGrid>
            <Generate>
              <Zap size={36} strokeWidth={1.4} />
              <GenerateText>
                <GenerateTitle>GERAR QUESTÕES</GenerateTitle>
                <GenerateSub>IA estilo CESPE/Cebraspe · escolha disciplina, tema e tipo</GenerateSub>
              </GenerateText>
              <CirclePlus size={32} strokeWidth={1.7} />
            </Generate>
            <StatGrid>
              {stats.map((s) => (
                <Stat key={s.label}>
                  <StatLabel>{s.label}</StatLabel>
                  <StatValue $tone={s.tone}>{s.value}</StatValue>
                  <StatNote>{s.note}</StatNote>
                </Stat>
              ))}
            </StatGrid>
            <Breakdown>
              <BreakdownHead>APROVEITAMENTO POR DISCIPLINA</BreakdownHead>
              {disciplinas.map((d) => (
                <BarRow key={d.name}>
                  <BarLabel>{d.name}</BarLabel>
                  <BarTrack>
                    <BarFill style={{ width: `${d.pct}%` }}>{d.pct}%</BarFill>
                  </BarTrack>
                  <BarCount>{d.count}</BarCount>
                </BarRow>
              ))}
            </Breakdown>
          </Page>
        </Main>
      </Body>
    </Shell>
  );
}
